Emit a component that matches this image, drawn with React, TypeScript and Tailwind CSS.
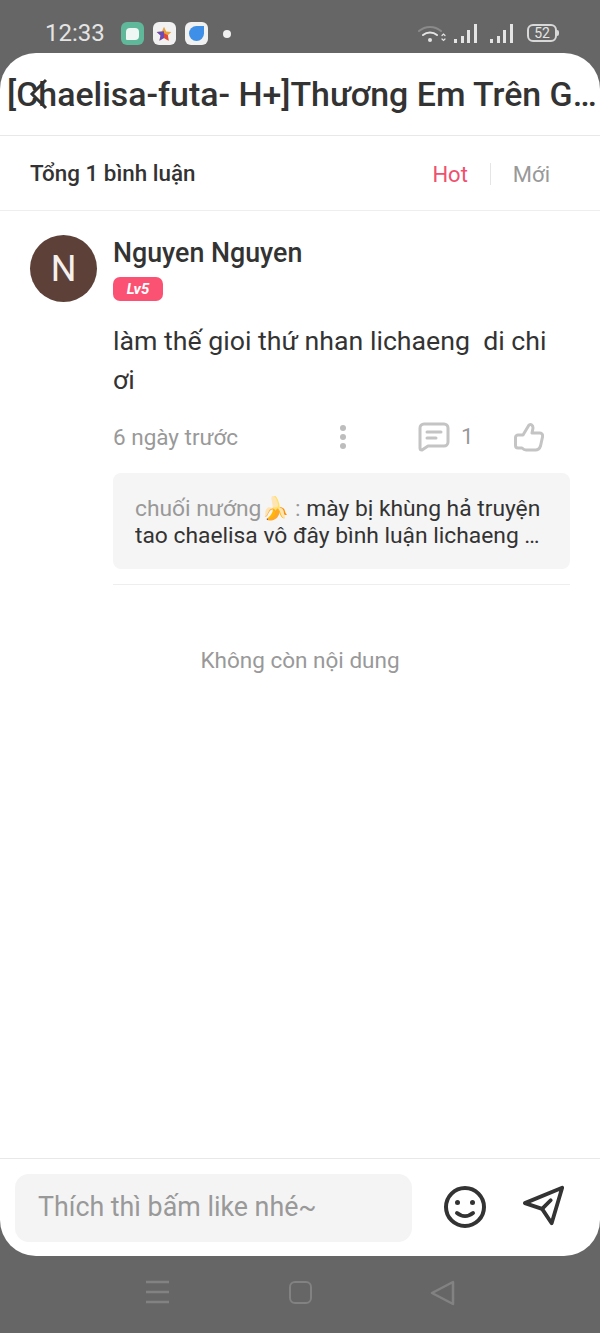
const FONT = "font-['Roboto','Noto_Sans',sans-serif]";

function StatusBar() {
  return (
    <div className="flex h-[53px] shrink-0 items-start justify-between pl-[45px] pr-[43px] pt-[20px]">
      <div className="flex items-center">
        <span className="text-[24px] leading-[27px] text-[#e4e4e4]">12:33</span>
        <span className="ml-[16px] flex h-[23px] w-[23px] items-center justify-center rounded-[6px] bg-[#5fb899]">
          <span className="h-[12px] w-[13px] rounded-[4px] rounded-bl-[1px] bg-[#eef7f3]" />
        </span>
        <span className="ml-[9px] flex h-[23px] w-[23px] items-center justify-center rounded-[6px] bg-[#f1f1f1]">
          <svg width="16" height="16" viewBox="0 0 24 24">
            <path d="M12 1l3.200 7.200 7.800.8-5.800 5.200 1.700 7.800L12 18l-6.900 4 1.700-7.800L1 9l7.800-.8z" fill="#e8a33d" />
            <path d="M12 8L1 9l5.800 5.200L5.100 22 12 18z" fill="#6d4bb5" />
            <path d="M12 11l6 3 1 8-7-4z" fill="#e0483e" />
          </svg>
        </span>
        <span className="ml-[9px] flex h-[23px] w-[23px] items-center justify-center rounded-[6px] bg-[#f1f1f1]">
          <span className="h-[15px] w-[15px] rounded-full rounded-tr-[3px] bg-[#3d8fe8]" />
        </span>
        <span className="ml-[15px] h-[8px] w-[8px] rounded-full bg-[#f0f0f0]" />
      </div>
      <div className="flex items-center gap-[7px] pt-[3px]">
        <svg width="28" height="20" viewBox="0 0 28 20" fill="none" strokeLinecap="round">
          <path d="M1 8a17 17 0 0 1 22 0" stroke="#8a8a8a" strokeWidth="2" />
          <path d="M5 12a11 11 0 0 1 14 0" stroke="#e4e4e4" strokeWidth="2" />
          <circle cx="12" cy="17" r="2" fill="#e4e4e4" />
          <path d="M24 12.500l1.500-1.500 1.500 1.500M24 16l1.500 1.500 1.500-1.500" stroke="#e4e4e4" strokeWidth="1.200" />
        </svg>
        <Signal />
        <span className="ml-[4px]">
          <Signal />
        </span>
        <span className="relative ml-[6px] flex h-[18px] w-[30px] items-center justify-center rounded-[6px] border-2 border-[#d8d8d8] text-[14px] leading-none text-[#e4e4e4]">
          52
          <span className="absolute right-[-4px] h-[6px] w-[2px] rounded-r-full bg-[#d8d8d8]" />
        </span>
      </div>
    </div>
  );
}

function Signal() {
  return (
    <span className="flex h-[20px] w-[25px] items-end justify-between px-[1px]">
      <span className="h-[4px] w-[3px] bg-[#e4e4e4]" />
      <span className="h-[7px] w-[3px] bg-[#e4e4e4]" />
      <span className="h-[13px] w-[3px] bg-[#e4e4e4]" />
      <span className="h-[19px] w-[3px] bg-[#e4e4e4]" />
    </span>
  );
}

function Header() {
  return (
    <div className="relative h-[83px] shrink-0 border-b border-[#e8e8e8] pl-[7px] pt-[22px]">
      <div className="truncate text-[33.900px] font-medium leading-[40px] text-[#333333]">
        [Chaelisa-futa- H+]Thương Em Trên Giường
      </div>
      <svg className="absolute left-[24px] top-[24px]" width="28" height="32" viewBox="0 0 28 32" fill="none">
        <path d="M22 3L8 17l14 14" stroke="#333333" strokeWidth="3" />
      </svg>
    </div>
  );
}

function SortRow() {
  return (
    <div className="flex h-[75px] shrink-0 items-center justify-between border-b border-[#eeeeee] pl-[30px] pr-[50px] pt-[2px]">
      <span className="text-[22.400px] font-medium text-[#333333]">Tổng 1 bình luận</span>
      <div className="flex items-center text-[22px]">
        <span className="text-[#f0506e]">Hot</span>
        <span className="mx-[22px] h-[22px] w-px bg-[#e5e5e5]" />
        <span className="text-[#999999]">Mới</span>
      </div>
    </div>
  );
}

function Comment() {
  return (
    <div className="flex gap-[16px] pl-[30px] pr-[30px] pt-[24px]">
      <div className="flex h-[67px] w-[67px] shrink-0 items-center justify-center rounded-full bg-[#5d4037] text-[36px] text-[#f5f0ee]">
        N
      </div>
      <div className="min-w-0 flex-1">
        <div className="text-[26.800px] font-medium leading-[36px] text-[#333333]">Nguyen Nguyen</div>
        <span className="mt-[6px] flex h-[24px] w-[50px] items-center justify-center rounded-[7px] bg-[#fb5273] text-[15px] font-bold italic text-white">
          Lv5
        </span>
        <p className="mt-[21px] w-[440px] whitespace-pre-wrap text-[26.700px] leading-[39px] text-[#333333]">
          làm thế gioi thứ nhan lichaeng  di chi ơi
        </p>
        <div className="mt-[17px] flex h-[40px] items-center text-[22.500px] text-[#999999]">
          <span className="mt-[2px] w-[225px]">6 ngày trước</span>
          <svg width="10" height="26" viewBox="0 0 10 26" fill="#bdbdbd">
            <circle cx="5" cy="4" r="3" />
            <circle cx="5" cy="13" r="3" />
            <circle cx="5" cy="22" r="3" />
          </svg>
          <svg className="ml-[70px]" width="32" height="30" viewBox="0 0 32 30" fill="none" stroke="#c4c4c4" strokeWidth="3" strokeLinecap="round" strokeLinejoin="round">
            <path d="M6 2h20a4 4 0 0 1 4 4v14a4 4 0 0 1-4 4H10l-6 4a2 2 0 0 1-2-2V6a4 4 0 0 1 4-4z" />
            <path d="M9 10h14M9 16h9" />
          </svg>
          <span className="ml-[11px]">1</span>
          <svg className="ml-[40px]" width="30" height="30" viewBox="0 0 30 30" fill="none" stroke="#c4c4c4" strokeWidth="3" strokeLinecap="round" strokeLinejoin="round">
            <path d="M9 13l6-10c2-1 4 0 4 3l-1 5h8c2 0 3 2 2.500 4l-2 9c-1 3-3 4-5 4H12c-2 0-3-1-4-2H4c-1.500 0-2.500-1-2.500-2.500v-8C1.500 14 3 13 4 13z" />
          </svg>
        </div>
        <div className="mt-[16px] rounded-[8px] bg-[#f5f5f5] px-[22px] pb-[20px] pt-[23px] text-[22.800px] leading-[26.500px] text-[#333333]">
          <div className="line-clamp-2">
            <span className="text-[#999999]">chuối nướng🍌 : </span>
            mày bị khùng hả truyện tao chaelisa vô đây bình luận lichaeng di chi ơi tao chửi cho
          </div>
        </div>
        <div className="mt-[15px] h-px bg-[#eeeeee]" />
      </div>
    </div>
  );
}

function InputBar() {
  return (
    <div className="flex h-[98px] shrink-0 items-start border-t border-[#e8e8e8] pl-[15px] pt-[15px]">
      <div className="flex h-[68px] w-[397px] items-center rounded-[14px] bg-[#f4f4f4] pb-[2px] pl-[23px] text-[26.800px] text-[#999999]">
        Thích thì bấm like nhé~
      </div>
      <svg className="ml-[31px] mt-[11px]" width="44" height="44" viewBox="0 0 44 44" fill="none" stroke="#333333" strokeWidth="4" strokeLinecap="round">
        <circle cx="22" cy="22" r="19" />
        <circle cx="14.500" cy="17.500" r="2.500" fill="#333333" stroke="none" />
        <circle cx="29.500" cy="17.500" r="2.500" fill="#333333" stroke="none" />
        <path d="M14 28c5 4 11 4 16 0" />
      </svg>
      <svg className="ml-[35px] mt-[10px]" width="44" height="44" viewBox="0 0 46 44" fill="none" stroke="#333333" strokeWidth="4" strokeLinecap="round" strokeLinejoin="round">
        <path d="M3 19L42 3 31 40 21 25z" />
        <path d="M21 25l9-9" />
      </svg>
    </div>
  );
}

function NavBar() {
  return (
    <div className="flex h-[77px] shrink-0 items-start pl-[145px] pt-[24px]">
      <svg width="24" height="24" viewBox="0 0 24 24" stroke="#828282" strokeWidth="2.500">
        <path d="M1 2h23M1 12h23M1 22h23" />
      </svg>
      <span className="ml-[120px] mt-[1px] h-[23px] w-[23px] rounded-[6px] border-2 border-[#828282]" />
      <svg className="ml-[118px]" width="26" height="26" viewBox="0 0 26 26" fill="none" stroke="#828282" strokeWidth="2.500" strokeLinejoin="round">
        <path d="M23 2v22L2 13z" />
      </svg>
    </div>
  );
}

export default function App() {
  return (
    <div className={`flex h-[1333px] w-[600px] flex-col overflow-hidden bg-[#666666] ${FONT}`}>
      <StatusBar />
      <div className="flex min-h-0 flex-1 flex-col overflow-hidden rounded-[36px] bg-white">
        <Header />
        <SortRow />
        <div className="min-h-0 flex-1">
          <Comment />
          <div className="mt-[59px] text-center text-[22.500px] text-[#999999]">Không còn nội dung</div>
        </div>
        <InputBar />
      </div>
      <NavBar />
    </div>
  );
}
